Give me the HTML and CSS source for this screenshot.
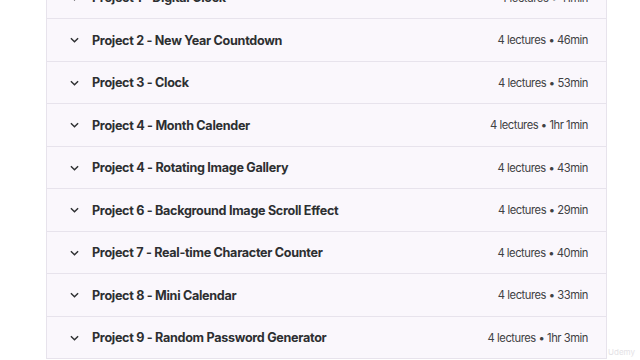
FILE: index.html
```html
<!DOCTYPE html>
<html lang="en">
<head>
  <meta charset="UTF-8">
  <title>Course content</title>
  <link rel="stylesheet" href="styles.css">
</head>
<body>
  <div class="curriculum">
    <div class="section">
      <span class="chev"><svg viewBox="0 0 10 6" width="9" height="6"><path d="M1 1l4 4 4-4" fill="none" stroke="currentColor" stroke-width="1.6"/></svg></span>
      <span class="title">Project 1 - Digital Clock</span>
      <span class="meta">4 lectures • 41min</span>
    </div>
    <div class="section">
      <span class="chev"><svg viewBox="0 0 10 6" width="9" height="6"><path d="M1 1l4 4 4-4" fill="none" stroke="currentColor" stroke-width="1.6"/></svg></span>
      <span class="title">Project 2 - New Year Countdown</span>
      <span class="meta">4 lectures • 46min</span>
    </div>
    <div class="section">
      <span class="chev"><svg viewBox="0 0 10 6" width="9" height="6"><path d="M1 1l4 4 4-4" fill="none" stroke="currentColor" stroke-width="1.6"/></svg></span>
      <span class="title">Project 3 - Clock</span>
      <span class="meta">4 lectures • 53min</span>
    </div>
    <div class="section">
      <span class="chev"><svg viewBox="0 0 10 6" width="9" height="6"><path d="M1 1l4 4 4-4" fill="none" stroke="currentColor" stroke-width="1.6"/></svg></span>
      <span class="title">Project 4 - Month Calender</span>
      <span class="meta">4 lectures • 1hr 1min</span>
    </div>
    <div class="section">
      <span class="chev"><svg viewBox="0 0 10 6" width="9" height="6"><path d="M1 1l4 4 4-4" fill="none" stroke="currentColor" stroke-width="1.6"/></svg></span>
      <span class="title">Project 4 - Rotating Image Gallery</span>
      <span class="meta">4 lectures • 43min</span>
    </div>
    <div class="section">
      <span class="chev"><svg viewBox="0 0 10 6" width="9" height="6"><path d="M1 1l4 4 4-4" fill="none" stroke="currentColor" stroke-width="1.6"/></svg></span>
      <span class="title">Project 6 - Background Image Scroll Effect</span>
      <span class="meta">4 lectures • 29min</span>
    </div>
    <div class="section">
      <span class="chev"><svg viewBox="0 0 10 6" width="9" height="6"><path d="M1 1l4 4 4-4" fill="none" stroke="currentColor" stroke-width="1.6"/></svg></span>
      <span class="title">Project 7 - Real-time Character Counter</span>
      <span class="meta">4 lectures • 40min</span>
    </div>
    <div class="section">
      <span class="chev"><svg viewBox="0 0 10 6" width="9" height="6"><path d="M1 1l4 4 4-4" fill="none" stroke="currentColor" stroke-width="1.6"/></svg></span>
      <span class="title">Project 8 - Mini Calendar</span>
      <span class="meta">4 lectures • 33min</span>
    </div>
    <div class="section">
      <span class="chev"><svg viewBox="0 0 10 6" width="9" height="6"><path d="M1 1l4 4 4-4" fill="none" stroke="currentColor" stroke-width="1.6"/></svg></span>
      <span class="title">Project 9 - Random Password Generator</span>
      <span class="meta">4 lectures • 1hr 3min</span>
    </div>
  </div>
  <span class="watermark">Udemy</span>
</body>
</html>
```

FILE: styles.css
```css
* { box-sizing: border-box; }
body {
  margin: 0;
  background: #ffffff;
  font-family: Inter, "Noto Sans", sans-serif;
  color: #2d2f31;
  height: 360px;
  overflow: hidden;
  position: relative;
}
.curriculum {
  margin: -23.2px 0 0 46px;
  width: 561px;
  background: #faf7fc;
  border-left: 1px solid #e7e3ec;
  border-right: 1px solid #e7e3ec;
}
.section {
  display: flex;
  align-items: center;
  height: 42.5px;
  padding: 0 18px 0 23px;
  border-bottom: 1px solid #e7e3ec;
}
.chev {
  display: flex;
  width: 22px;
  color: #2d2f31;
}
.title {
  flex: 1;
  font-size: 12.6px;
  font-weight: 700;
  letter-spacing: -0.3px;
}
.meta {
  font-size: 11.2px;
  letter-spacing: -0.45px;
  color: #3e4143;
}
.watermark {
  position: absolute;
  right: 5px;
  bottom: 3px;
  font-size: 8px;
  color: #e4e2e6;
}
```
